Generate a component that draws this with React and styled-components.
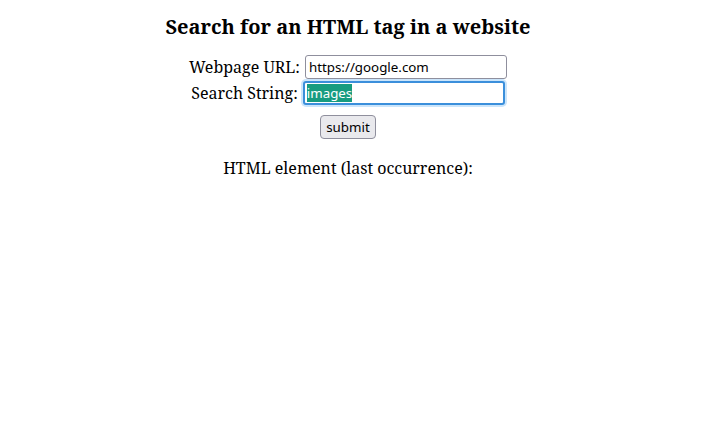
import React, { useEffect, useRef, useState } from 'react';
import styled, { createGlobalStyle } from 'styled-components';

const GlobalStyle = createGlobalStyle`
  body {
    margin: 0;
    background: #fff;
    font-family: "Noto Serif", "DejaVu Serif", serif;
    color: #000;
  }
`;

const Page = styled.div`
  padding: 0 14px 0 8px;
  text-align: center;
`;

const Title = styled.h2`
  font-size: 20px;
  font-weight: 700;
  line-height: 27px;
  margin: 13px 0 14px;
`;

const Form = styled.form`
  margin: 0;
`;

const Row = styled.div`
  display: flex;
  justify-content: center;
  align-items: center;
  gap: 5px;
  height: 26px;
  font-size: 16px;
`;

const Label = styled.label`
  white-space: nowrap;
`;

const Field = styled.input`
  box-sizing: border-box;
  width: 202px;
  height: 24px;
  padding: ${(p) => (p.$focused ? '0 2px' : '0 3px')};
  font-family: "Noto Sans", sans-serif;
  font-size: 13.33px;
  color: #000;
  background: #fff;
  border: ${(p) => (p.$focused ? '2px solid #3b8fdb' : '1px solid #8f8f9d')};
  border-radius: 3px;
  box-shadow: ${(p) => (p.$focused ? '0 0 0 2px #cbe5fb' : 'none')};
  outline: none;

  &::selection {
    background: #179c80;
    color: #fff;
  }
`;

const ButtonRow = styled.div`
  display: flex;
  justify-content: center;
  margin-top: 9px;
`;

const SubmitButton = styled.button`
  box-sizing: border-box;
  height: 24px;
  padding: 0 5px;
  font-family: "Noto Sans", sans-serif;
  font-size: 13.33px;
  color: #000;
  background: #e9e9ed;
  border: 1px solid #8f8f9d;
  border-radius: 4px;
`;

const Result = styled.p`
  font-size: 16px;
  line-height: 22px;
  margin: 18px 0 0;
`;

const App = () => {
  const [url, setUrl] = useState('https://google.com');
  const [search, setSearch] = useState('images');
  const searchRef = useRef(null);

  useEffect(() => {
    // select the search text like the focused field in the screenshot
    if (searchRef.current) {
      searchRef.current.focus();
      searchRef.current.select();
    }
  }, []);

  return (
    <Page>
      <GlobalStyle />
      <Title>Search for an HTML tag in a website</Title>
      <Form onSubmit={(e) => e.preventDefault()}>
        <Row>
          <Label htmlFor="url">Webpage URL:</Label>
          <Field id="url" type="text" value={url} onChange={(e) => setUrl(e.target.value)} />
        </Row>
        <Row>
          <Label htmlFor="search">Search String:</Label>
          <Field
            id="search"
            ref={searchRef}
            $focused
            type="text"
            value={search}
            onChange={(e) => setSearch(e.target.value)}
          />
        </Row>
        <ButtonRow>
          <SubmitButton type="submit">submit</SubmitButton>
        </ButtonRow>
      </Form>
      <Result>HTML element (last occurrence):</Result>
    </Page>
  );
};

export default App;
